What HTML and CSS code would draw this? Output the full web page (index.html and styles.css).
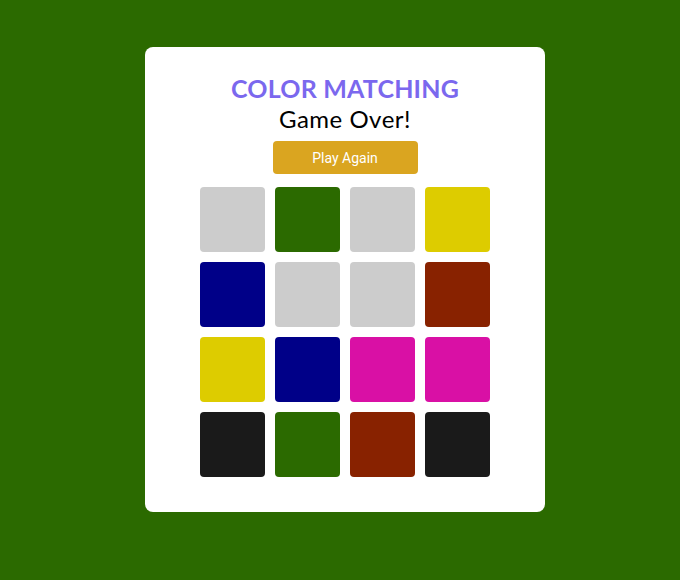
FILE: index.html
```html
<!DOCTYPE html>
<html lang="en">
<head>
    <meta charset="UTF-8">
    <meta name="viewport" content="width=device-width, initial-scale=1.0">
    <title>Color Matching</title>
    <link rel="stylesheet" href="styles.css">
</head>
<body>

<div class="game-card">
    <h1 class="game-title">COLOR MATCHING</h1>
    <h2 class="game-status">Game Over!</h2>
    <button class="play-btn">Play Again</button>

    <div class="board">
        <div class="tile tile-gray"></div>
        <div class="tile tile-green"></div>
        <div class="tile tile-gray"></div>
        <div class="tile tile-yellow"></div>

        <div class="tile tile-navy"></div>
        <div class="tile tile-gray"></div>
        <div class="tile tile-gray"></div>
        <div class="tile tile-brown"></div>

        <div class="tile tile-yellow"></div>
        <div class="tile tile-navy"></div>
        <div class="tile tile-pink"></div>
        <div class="tile tile-pink"></div>

        <div class="tile tile-black"></div>
        <div class="tile tile-green"></div>
        <div class="tile tile-brown"></div>
        <div class="tile tile-black"></div>
    </div>
</div>

</body>
</html>
```

FILE: styles.css
```css
body {
    font-family: 'Lato', sans-serif;
    background-color: #2b6a00;
    margin: 0;
    padding: 47px 0 47px 10px;
    display: flex;
    justify-content: center;
}

.game-card {
    width: 400px;
    height: 465px;
    box-sizing: border-box;
    background: #fff;
    border-radius: 8px;
    padding-top: 26px;
    display: flex;
    flex-direction: column;
    align-items: center;
}

.game-title {
    margin: 0;
    font-size: 25px;
    font-weight: 700;
    letter-spacing: 0.2px;
    color: #7b68ee;
    line-height: 30px;
}

.game-status {
    margin: 1px 0 0;
    font-size: 24px;
    font-weight: 400;
    letter-spacing: 0.5px;
    color: #000;
    line-height: 30px;
}

.play-btn {
    margin-top: 7px;
    width: 145px;
    height: 33px;
    border: none;
    border-radius: 4px;
    background-color: #daa520;
    color: #fff;
    font-family: 'Roboto', sans-serif;
    font-size: 14px;
    font-weight: 400;
    cursor: pointer;
}

.board {
    margin-top: 13px;
    display: grid;
    grid-template-columns: repeat(4, 65px);
    grid-auto-rows: 65px;
    gap: 10px;
}

.tile {
    border-radius: 4px;
}

.tile-gray { background-color: #cccccc; }
.tile-green { background-color: #2b6a00; }
.tile-yellow { background-color: #ddcc00; }
.tile-navy { background-color: #000088; }
.tile-brown { background-color: #882200; }
.tile-pink { background-color: #d910a5; }
.tile-black { background-color: #1a1a1a; }
```
